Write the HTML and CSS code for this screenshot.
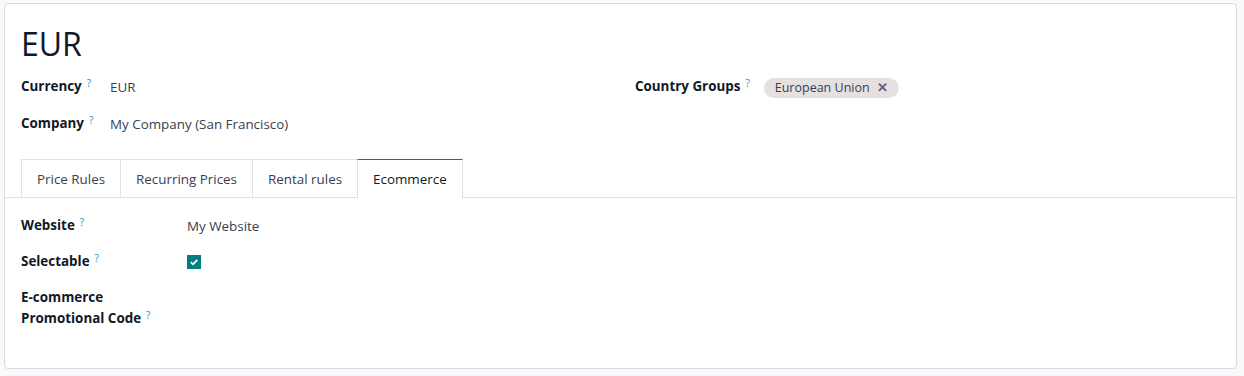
FILE: index.html
```html
<!DOCTYPE html>
<html>
<head>
<meta charset="utf-8">
<link rel="stylesheet" href="styles.css">
</head>
<body>
<div class="sheet">
  <h1 class="title">EUR</h1>
  <div class="groups">
    <div class="group">
      <div class="row">
        <div class="label">Currency<sup class="help">?</sup></div>
        <div class="value">EUR</div>
      </div>
      <div class="row">
        <div class="label">Company<sup class="help">?</sup></div>
        <div class="value">My Company (San Francisco)</div>
      </div>
    </div>
    <div class="group right">
      <div class="row">
        <div class="label">Country Groups<sup class="help">?</sup></div>
        <div class="value"><span class="tag">European Union<span class="tag-x">✕</span></span></div>
      </div>
    </div>
  </div>
  <div class="tabs">
    <div class="tab">Price Rules</div>
    <div class="tab">Recurring Prices</div>
    <div class="tab">Rental rules</div>
    <div class="tab active">Ecommerce</div>
  </div>
  <div class="tab-content">
    <div class="row2">
      <div class="label2">Website<sup class="help">?</sup></div>
      <div class="value">My Website</div>
    </div>
    <div class="row2">
      <div class="label2">Selectable<sup class="help">?</sup></div>
      <div class="value"><span class="check"><svg width="10" height="10" viewBox="0 0 10 10"><path d="M1.8 5.2 L4 7.3 L8.3 2.8" fill="none" stroke="#fff" stroke-width="1.8"/></svg></span></div>
    </div>
    <div class="row2">
      <div class="label2">E-commerce Promotional Code<sup class="help">?</sup></div>
      <div class="value"></div>
    </div>
  </div>
</div>
</body>
</html>
```
FILE: styles.css
```css
html, body { margin: 0; padding: 0; }
body {
  background: #f8f9fa;
  font-family: "Open Sans", "Noto Sans", sans-serif;
  font-size: 13.4px;
  color: #374151;
  width: 1244px;
  height: 376px;
  overflow: hidden;
}
.sheet {
  margin: 3px 0 0 4px;
  width: 1231px;
  height: 364px;
  background: #fff;
  border: 1px solid #d8dadd;
  border-radius: 4px;
  box-sizing: content-box;
}
.title {
  margin: 0;
  padding: 18px 16px 0 16px;
  font-size: 32px;
  font-weight: 400;
  line-height: 44px;
  color: #111827;
}
.groups {
  display: flex;
  padding: 4px 16px 0 16px;
}
.group { flex: 1; }
.group.right { padding-left: 29px; }
.row {
  display: flex;
  align-items: flex-start;
  min-height: 37px;
}
.label {
  font-weight: 700;
  color: #111827;
  padding-right: 18px;
  line-height: 21px;
  padding-top: 6px;
}
.group.right .label { padding-right: 14px; }
.group:first-child .label { width: 71px; }
.value {
  line-height: 21px;
  padding-top: 7px;
}
.help {
  color: #1f8dc1;
  font-size: 10px;
  font-weight: 400;
  margin-left: 5px;
  vertical-align: top;
  position: relative;
  top: -3px;
}
.tag {
  display: inline-flex;
  align-items: center;
  background: #e6e0e1;
  border-radius: 11px;
  padding: 0 11px;
  height: 20px;
  font-size: 12.5px;
  color: #374151;
  margin-top: -1px;
}
.tag-x { margin-left: 7px; font-size: 13px; font-weight: 700; color: #5b6270; }
.tabs {
  display: flex;
  margin-top: 15px;
  padding-left: 16px;
  border-bottom: 1px solid #dee2e6;
}
.tab {
  border: 1px solid #dee2e6;
  border-bottom: none;
  margin-right: -1px;
  padding: 0 15px;
  height: 37px;
  line-height: 39px;
  color: #374151;
}
.tab.active {
  border-top: 1px solid #714b67;
  color: #111827;
  background: #fff;
  margin-bottom: -1px;
  height: 38px;
}
.tab-content { padding: 11px 16px 0 16px; }
.row2 { display: flex; min-height: 36px; }
.label2 {
  width: 150px;
  padding-right: 16px;
  font-weight: 700;
  color: #111827;
  line-height: 21px;
  padding-top: 6px;
}
.check {
  display: inline-flex;
  width: 14px;
  height: 14px;
  background: #017e84;
  align-items: center;
  justify-content: center;
  margin-top: 0;
}
```
